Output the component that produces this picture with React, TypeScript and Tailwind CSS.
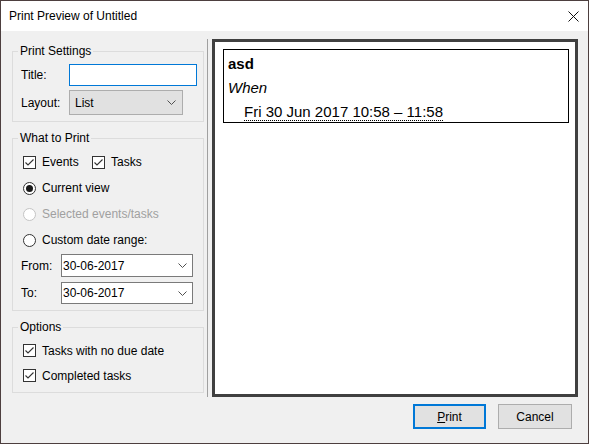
import React from "react";

const font = { fontFamily: '"Liberation Sans", Arial, sans-serif' };

function Chevron() {
  return (
    <svg width="9" height="5" viewBox="0 0 9 5" className="shrink-0">
      <polyline points="0.5,0.5 4.5,4.5 8.5,0.5" fill="none" stroke="#505050" strokeWidth="1" />
    </svg>
  );
}

function CheckBox({ label, width }: { label: string; width?: string }) {
  return (
    <div className={`flex items-center gap-[6px] ${width ?? ""}`}>
      <span className="flex h-[13px] w-[13px] shrink-0 items-center justify-center border border-[#333333] bg-white">
        <svg width="11" height="11" viewBox="0 0 11 11">
          <polyline points="1.5,5.5 4,8 9.5,2.5" fill="none" stroke="#333333" strokeWidth="1.1" />
        </svg>
      </span>
      <span>{label}</span>
    </div>
  );
}

function Radio({ label, checked, disabled }: { label: string; checked?: boolean; disabled?: boolean }) {
  return (
    <div className={`flex items-center gap-[6px] ${disabled ? "text-[#a0a0a0]" : ""}`}>
      <span
        className={`flex h-[13px] w-[13px] shrink-0 items-center justify-center rounded-full border bg-white ${
          disabled ? "border-[#c4c4c4]" : "border-[#333333]"
        }`}
      >
        {checked && <span className="h-[7px] w-[7px] rounded-full bg-[#1a1a1a]" />}
      </span>
      <span>{label}</span>
    </div>
  );
}

function DateCombo({ className }: { className: string }) {
  return (
    <div className={`flex w-[132px] items-center justify-between border border-[#7a7a7a] bg-white pl-[1px] pr-[5px] ${className}`}>
      <span>30-06-2017</span>
      <Chevron />
    </div>
  );
}

export default function App() {
  return (
    <div
      style={font}
      className="flex h-[444px] w-[589px] flex-col border border-[#4d3f3f] bg-[#f0f0f0] text-[12px] text-black"
    >
      {/* title bar */}
      <div className="flex h-[30px] shrink-0 items-center justify-between bg-white pl-[8px] pr-[9px]">
        <span>Print Preview of Untitled</span>
        <svg width="11" height="11" viewBox="0 0 11 11">
          <path d="M0.5 0.5 L10.5 10.5 M10.5 0.5 L0.5 10.5" stroke="#111111" strokeWidth="1" />
        </svg>
      </div>

      <div className="flex items-start">
        {/* left settings column */}
        <div className="ml-[11px] mt-[12px] flex w-[192px] flex-col gap-[8px]">
          <fieldset className="h-[79px] border border-[#dcdcdc]">
            <legend className="ml-[5px] px-[2px] leading-[16px]">Print Settings</legend>
            <div className="flex flex-col gap-[4px] pl-[8px] pt-[5px]">
              <div className="flex h-[22px] items-center">
                <span className="w-[48px]">Title:</span>
                <div className="h-[22px] w-[128px] border border-[#0078d7] bg-white" />
              </div>
              <div className="flex h-[25px] items-center">
                <span className="w-[48px]">Layout:</span>
                <div className="flex h-[25px] w-[114px] items-center justify-between border border-[#adadad] bg-[#e1e1e1] pl-[5px] pr-[6px]">
                  <span>List</span>
                  <Chevron />
                </div>
              </div>
            </div>
          </fieldset>

          <fieldset className="h-[181px] border border-[#dcdcdc]">
            <legend className="ml-[5px] px-[2px] leading-[16px]">What to Print</legend>
            <div className="flex flex-col pt-[3px]">
              <div className="flex h-[26px] items-center pl-[10px]">
                <CheckBox label="Events" width="w-[69px]" />
                <CheckBox label="Tasks" />
              </div>
              <div className="flex h-[26px] items-center pl-[10px]">
                <Radio label="Current view" checked />
              </div>
              <div className="flex h-[26px] items-center pl-[10px]">
                <Radio label="Selected events/tasks" disabled />
              </div>
              <div className="flex h-[26px] items-center pl-[10px]">
                <Radio label="Custom date range:" />
              </div>
              <div className="mt-[1px] flex items-center pl-[8px]">
                <span className="w-[40px]">From:</span>
                <DateCombo className="h-[23px]" />
              </div>
              <div className="mt-[5px] flex items-center pl-[8px]">
                <span className="w-[40px]">To:</span>
                <DateCombo className="h-[22px]" />
              </div>
            </div>
          </fieldset>

          <fieldset className="h-[74px] border border-[#dcdcdc]">
            <legend className="ml-[5px] px-[2px] leading-[16px]">Options</legend>
            <div className="flex flex-col pt-[3px] pl-[10px]">
              <div className="flex h-[25px] items-center">
                <CheckBox label="Tasks with no due date" />
              </div>
              <div className="flex h-[25px] items-center">
                <CheckBox label="Completed tasks" />
              </div>
            </div>
          </fieldset>
        </div>

        {/* splitter */}
        <div className="ml-[3px] mt-[8px] h-[358px] w-px bg-[#a0a0a0]" />

        {/* preview */}
        <div className="ml-[4px] mt-[8px] h-[358px] w-[366px] border-[3px] border-[#404040] bg-white pl-[8px] pt-[7px]">
          <div className="flex h-[74px] w-[346px] flex-col border border-black pl-[4px] text-[15px] leading-[24px]">
            <div className="mt-[2px] font-bold">asd</div>
            <div className="italic">When</div>
            <div className="pl-[16px]">
              <span className="underline decoration-dotted decoration-1 underline-offset-[3px]">
                Fri 30 Jun 2017 10:58 – 11:58
              </span>
            </div>
          </div>
        </div>
      </div>

      {/* buttons */}
      <div className="mt-[7px] flex justify-end gap-[12px] pr-[16px]">
        <button className="flex h-[25px] w-[73px] items-center justify-center border-2 border-[#0078d7] bg-[#e1e1e1]">
          <span>
            <span className="underline">P</span>rint
          </span>
        </button>
        <button className="flex h-[25px] w-[74px] items-center justify-center border border-[#adadad] bg-[#e1e1e1]">
          Cancel
        </button>
      </div>
    </div>
  );
}
